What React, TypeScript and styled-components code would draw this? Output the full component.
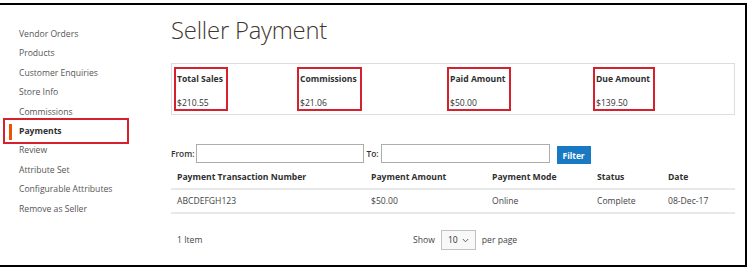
import styled, { createGlobalStyle } from "styled-components"

const GlobalStyle = createGlobalStyle`
  html, body {
    margin: 0;
    padding: 0;
    background: #fff;
  }
  body {
    font-family: "Open Sans", "Liberation Sans", sans-serif;
    color: #333;
  }
`

const SFrame = styled.div`
  box-sizing: border-box;
  margin-top: 3px;
  width: 747px;
  height: 264px;
  border-top: 2px solid #000;
  border-right: 2px solid #000;
  border-bottom: 2px solid #000;
  display: flex;
`

const SSidebar = styled.nav`
  width: 171px;
  flex-shrink: 0;
  padding-top: 20px;
  box-sizing: border-box;
  display: flex;
  flex-direction: column;
`

interface INavItem {
  active?: boolean
}
const SNavItem = styled.div<INavItem>`
  position: relative;
  height: 19.4px;
  line-height: 19.4px;
  padding-left: 19px;
  font-size: 8.6px;
  color: ${({ active }) => (active ? "#303030" : "#555")};
  font-weight: ${({ active }) => (active ? 700 : 400)};

  ${({ active }) =>
    active &&
    `
    &::before {
      content: "";
      position: absolute;
      left: 9px;
      top: 2px;
      width: 2.5px;
      height: 16px;
      background: #eb5202;
    }
    &::after {
      content: "";
      position: absolute;
      left: 3px;
      top: -4px;
      width: 126px;
      height: 26px;
      box-sizing: border-box;
      border: 2px solid #d7202e;
    }
  `}
`

const SMain = styled.main`
  width: 564px;
  display: flex;
  flex-direction: column;
`

const STitle = styled.h1`
  margin: 8px 0 0 0;
  font-size: 23.8px;
  font-weight: 300;
  color: #41362f;
  line-height: 34px;
  height: 34px;
  letter-spacing: -0.2px;
`

const SSummary = styled.div`
  margin-top: 16px;
  height: 52px;
  box-sizing: border-box;
  border: 1px solid #ddd;
  display: grid;
  grid-template-columns: 123px 150px 146px 1fr;
  padding-left: 2px;
  align-items: center;
`

const SStat = styled.div`
  justify-self: start;
  box-sizing: border-box;
  height: 44px;
  border: 2px solid #d7202e;
  padding: 4px 3px 0 1px;
  display: flex;
  flex-direction: column;
  justify-content: space-between;
  font-size: 8.6px;
`

const SStatLabel = styled.div`
  font-weight: 700;
  color: #303030;
`

const SStatValue = styled.div`
  color: #333;
`

const SFilterRow = styled.div`
  margin-top: 28px;
  display: flex;
  align-items: center;
  height: 20px;
  font-size: 8.4px;
  font-weight: 600;
  color: #333;
`

interface IInput {
  w: number
}
const SInput = styled.div<IInput>`
  width: ${({ w }) => w}px;
  height: 19px;
  box-sizing: border-box;
  border: 1px solid #adadad;
  background: #fff;
  margin-left: 2px;
  margin-right: 2px;
`

const SFilterButton = styled.button`
  margin-left: 5px;
  margin-top: 4px;
  height: 18px;
  width: 34px;
  padding: 0;
  border: none;
  background: #1979c3;
  color: #fff;
  font-family: inherit;
  font-size: 8.4px;
  font-weight: 700;
`

const STable = styled.div`
  margin-top: 3px;
  display: flex;
  flex-direction: column;
`

const SRow = styled.div`
  display: grid;
  grid-template-columns: 194px 121px 105px 71px 1fr;
  padding-left: 6px;
  height: 22px;
  align-items: center;
  border-bottom: 2px solid #e8e8e8;
  font-size: 8.6px;
`

interface ICell {
  head?: boolean
}
const SCell = styled.div<ICell>`
  font-weight: ${({ head }) => (head ? 700 : 400)};
  color: ${({ head }) => (head ? "#303030" : "#444")};
`

const SPager = styled.div`
  margin-top: 16px;
  display: flex;
  align-items: center;
  padding-left: 6px;
  font-size: 8.6px;
  color: #444;
  height: 20px;
`

const SPagerCount = styled.div`
  width: 236px;
`

const SSelect = styled.div`
  margin: 0 6px 0 6px;
  width: 35px;
  height: 20px;
  box-sizing: border-box;
  border: 1px solid #c2c2c2;
  background: #f8f8f8;
  display: flex;
  align-items: center;
  justify-content: center;
  gap: 4px;
  color: #333;
`

const navItems = [
  "Vendor Orders",
  "Products",
  "Customer Enquiries",
  "Store Info",
  "Commissions",
  "Payments",
  "Review",
  "Attribute Set",
  "Configurable Attributes",
  "Remove as Seller",
]

const stats = [
  { label: "Total Sales", value: "$210.55" },
  { label: "Commissions", value: "$21.06" },
  { label: "Paid Amount", value: "$50.00" },
  { label: "Due Amount", value: "$139.50" },
]

const columns = ["Payment Transaction Number", "Payment Amount", "Payment Mode", "Status", "Date"]
const rows = [["ABCDEFGH123", "$50.00", "Online", "Complete", "08-Dec-17"]]

const App = () => {
  return (
    <>
      <GlobalStyle />
      <SFrame>
        <SSidebar>
          {navItems.map((item) => (
            <SNavItem key={item} active={item === "Payments"}>
              {item}
            </SNavItem>
          ))}
        </SSidebar>
        <SMain>
          <STitle>Seller Payment</STitle>
          <SSummary>
            {stats.map((s) => (
              <SStat key={s.label}>
                <SStatLabel>{s.label}</SStatLabel>
                <SStatValue>{s.value}</SStatValue>
              </SStat>
            ))}
          </SSummary>
          <SFilterRow>
            From:
            <SInput w={168} />
            To:
            <SInput w={169} />
            <SFilterButton>Filter</SFilterButton>
          </SFilterRow>
          <STable>
            <SRow>
              {columns.map((c) => (
                <SCell head key={c}>{c}</SCell>
              ))}
            </SRow>
            {rows.map((r) => (
              <SRow key={r[0]}>
                {r.map((v, i) => (
                  <SCell key={i}>{v}</SCell>
                ))}
              </SRow>
            ))}
          </STable>
          <SPager>
            <SPagerCount>1 Item</SPagerCount>
            Show
            <SSelect>
              10
              <svg width="7" height="5" viewBox="0 0 7 5">
                <path d="M0.8 1 L3.5 3.8 L6.2 1" fill="none" stroke="#555" strokeWidth="0.9" />
              </svg>
            </SSelect>
            per page
          </SPager>
        </SMain>
      </SFrame>
    </>
  )
}

export default App
